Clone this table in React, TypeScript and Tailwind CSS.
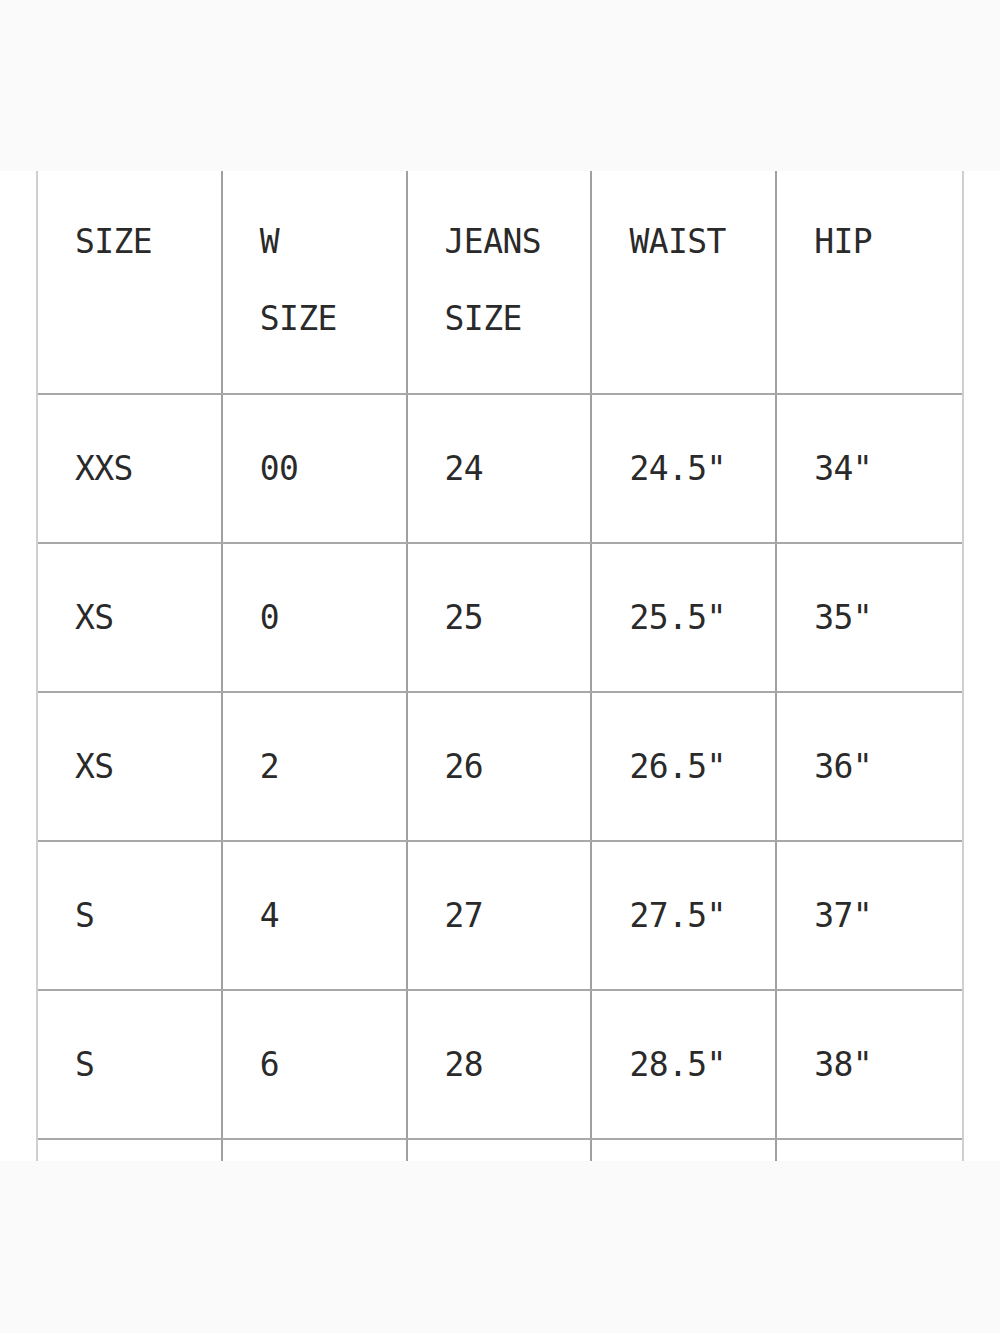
const header = [["SIZE"], ["W", "SIZE"], ["JEANS", "SIZE"], ["WAIST"], ["HIP"]];

const rows = [
  ["XXS", "00", "24", '24.5"', '34"'],
  ["XS", "0", "25", '25.5"', '35"'],
  ["XS", "2", "26", '26.5"', '36"'],
  ["S", "4", "27", '27.5"', '37"'],
  ["S", "6", "28", '28.5"', '38"'],
];

export default function App() {
  return (
    <main
      className="min-h-[1333px] w-[1000px] bg-[#fbfafa] text-[#2a2a2a]"
      style={{ fontFamily: '"DejaVu Sans Mono", "Liberation Mono", monospace' }}
    >
      <div className="h-[171px] bg-[#fbfafa]" />

      <div className="h-[990px] overflow-hidden bg-white">
        <div className="ml-[36px] w-[928px] border-x-2 border-[#cfcfcf]">
          {/* header */}
          <div className="grid grid-cols-5 border-b-2 border-[#a8a8a8]">
            {header.map((lines, i) => (
              <div
                key={i}
                className={`h-[222px] pl-[37px] pt-[32px] text-[33px] leading-[77px] tracking-[-0.6px] ${
                  i < 4 ? "border-r-2 border-[#a0a0a0]" : ""
                }`}
              >
                {lines.map((l) => (
                  <div key={l}>{l}</div>
                ))}
              </div>
            ))}
          </div>

          {rows.map((row, r) => (
            <div key={r} className="grid grid-cols-5 border-b-2 border-[#a8a8a8]">
              {row.map((cell, i) => (
                <div
                  key={i}
                  className={`flex h-[147px] items-center pl-[37px] text-[33px] leading-[76px] tracking-[-0.6px] ${
                    i < 4 ? "border-r-2 border-[#a0a0a0]" : ""
                  }`}
                >
                  {cell}
                </div>
              ))}
            </div>
          ))}

          <div className="grid h-[60px] grid-cols-5">
            {[0, 1, 2, 3, 4].map((i) => (
              <div key={i} className={i < 4 ? "border-r-2 border-[#a0a0a0]" : ""} />
            ))}
          </div>
        </div>
      </div>

      <div className="h-[172px] bg-[#fbfafa]" />
    </main>
  );
}
